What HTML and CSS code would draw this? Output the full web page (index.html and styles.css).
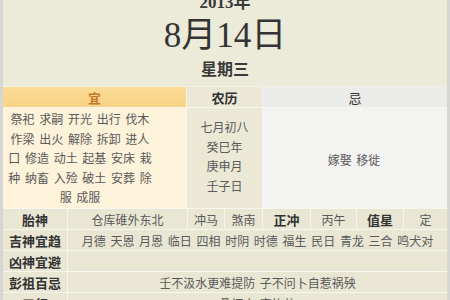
FILE: index.html
```html
<!DOCTYPE html>
<html lang="zh-CN">
<head>
<meta charset="utf-8">
<title>2013年8月14日 黄历</title>
<link rel="stylesheet" href="styles.css">
</head>
<body>
<div class="frame">
  <header class="head">
    <div class="year">2013年</div>
    <div class="date">8月14日</div>
    <div class="week">星期三</div>
  </header>
  <section class="almanac">
    <div class="th th-yi">宜</div>
    <div class="th th-nl">农历</div>
    <div class="th th-ji">忌</div>
    <div class="td td-yi">
      <span class="ln">祭祀 求嗣 开光 出行 伐木</span>
      <span class="ln">作梁 出火 解除 拆卸 进人</span>
      <span class="ln">口 修造 动土 起基 安床 栽</span>
      <span class="ln">种 纳畜 入殓 破土 安葬 除</span>
      <span class="ln">服 成服</span>
    </div>
    <div class="td td-nl">
      <span class="ln">七月初八</span>
      <span class="ln">癸巳年</span>
      <span class="ln">庚申月</span>
      <span class="ln">壬子日</span>
    </div>
    <div class="td td-ji">嫁娶 移徙</div>
  </section>
  <section class="info">
    <div class="lab">胎神</div>
    <div class="val">仓库碓外东北</div>
    <div class="val">冲马</div>
    <div class="val">煞南</div>
    <div class="lab">正冲</div>
    <div class="val">丙午</div>
    <div class="lab">值星</div>
    <div class="val">定</div>

    <div class="lab">吉神宜趋</div>
    <div class="val wide">月德 天恩 月恩 临日 四相 时阴 时德 福生 民日 青龙 三合 鸣犬对</div>

    <div class="lab">凶神宜避</div>
    <div class="val wide"></div>

    <div class="lab">彭祖百忌</div>
    <div class="val wide">壬不汲水更难提防 子不问卜自惹祸殃</div>

    <div class="lab">五行</div>
    <div class="val wide">桑柘木 定执位</div>
  </section>
</div>
</body>
</html>
```
FILE: styles.css
```css
* { box-sizing: border-box; }
html, body {
  margin: 0;
  padding: 0;
  background: #d6d6d4;
}
.frame {
  width: 450px;
  height: 300px;
  overflow: hidden;
  background: #ecead9;
  border-left: 3px solid #d6d6d4;
  border-right: 3px solid #d6d6d4;
  font-family: "Noto Sans CJK SC", sans-serif;
  color: #555;
}
.head {
  height: 86px;
  display: flex;
  flex-direction: column;
  align-items: center;
  color: #3a3a3a;
  font-weight: bold;
}
.year {
  font-family: "Liberation Serif", "Noto Sans CJK SC", serif;
  font-size: 17px;
  height: 14px;
  line-height: 14px;
  margin-top: -4px;
}
.date {
  font-family: "Liberation Serif", "Noto Sans CJK SC", serif;
  font-weight: normal;
  font-size: 35px;
  line-height: 36px;
  height: 36px;
  margin-top: 8px;
  color: #333;
}
.week {
  font-size: 16px;
  line-height: 20px;
  margin-top: 4px;
}
.almanac {
  display: grid;
  grid-template-columns: 183px 75px 184px;
  grid-template-rows: 20px 100px;
  gap: 1px;
  background: #f6f5ee;
  border-top: 1px solid #f4f1e2;
}
.th {
  display: flex;
  align-items: center;
  justify-content: center;
  font-size: 13px;
  font-weight: bold;
  color: #333;
}
.th-yi {
  background: linear-gradient(#fbdc98, #f8d385);
  color: #c47a2a;
}
.th-nl { background: #ebe9d6; }
.th-ji { background: #ebebea; font-weight: normal; }
.td {
  font-size: 12px;
  color: #5a5a5a;
}
.td-yi {
  background: #fdf2da;
  display: flex;
  flex-direction: column;
  align-items: center;
  padding: 0 29px 0 0;
  padding-top: 1px;
  line-height: 19.5px;
  word-spacing: 2px;
}
.td-nl {
  background: #ebe9d6;
  display: flex;
  flex-direction: column;
  align-items: center;
  justify-content: center;
  line-height: 19.5px;
  padding-bottom: 4px;
}
.td-ji {
  background: #f3f3f2;
  display: flex;
  align-items: center;
  justify-content: center;
  padding-right: 2px;
  word-spacing: 2px;
  padding-top: 2px;
}
.ln { display: block; white-space: nowrap; }
.info {
  display: grid;
  grid-template-columns: 64px 119px 36px 37px 47px 45px 46px 43px;
  grid-auto-rows: 20px;
  gap: 1px;
  background: #f6f5ee;
  border-top: 1px solid #f6f5ee;
}
.lab, .val {
  display: flex;
  align-items: center;
  justify-content: center;
  background: #e9e7d4;
  font-size: 12px;
  white-space: nowrap;
}
.lab {
  font-size: 13px;
  font-weight: bold;
  color: #333;
}
.val { color: #5a5a5a; }
.wide {
  grid-column: span 7;
  word-spacing: 2px;
}
```
